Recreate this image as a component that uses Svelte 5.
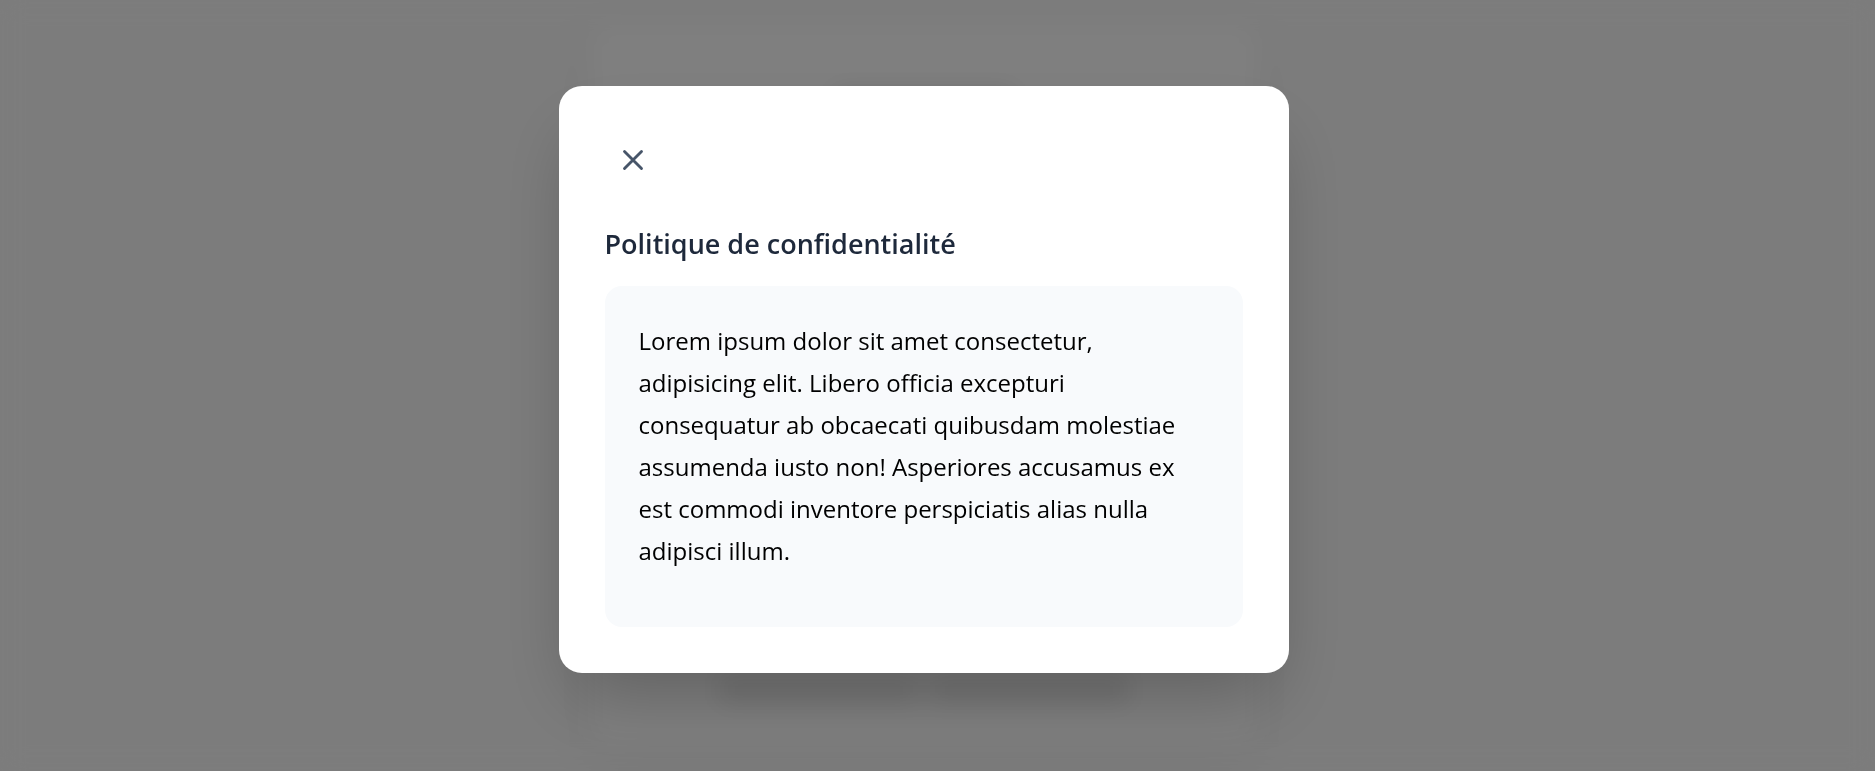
<script>
  let open = $state(true);
</script>

<div class="page" aria-hidden="true">
  <div class="card">
    <div class="smudge heading"></div>
    <div class="links">
      <div class="smudge"></div>
      <div class="smudge"></div>
    </div>
  </div>
</div>

{#if open}
  <div class="overlay">
    <div class="modal" role="dialog" aria-modal="true" aria-labelledby="policy-title">
      <button class="close" type="button" aria-label="Fermer" onclick={() => (open = false)}>
        <svg viewBox="0 0 24 24" aria-hidden="true">
          <path d="M18 6 6 18M6 6l12 12" />
        </svg>
      </button>
      <h2 id="policy-title">Politique de confidentialité</h2>
      <div class="content">
        <p>
          Lorem ipsum dolor sit amet consectetur, adipisicing elit. Libero officia excepturi
          consequatur ab obcaecati quibusdam molestiae assumenda iusto non! Asperiores accusamus ex
          est commodi inventore perspiciatis alias nulla adipisci illum.
        </p>
      </div>
    </div>
  </div>
{/if}

<style>
  :global(body) {
    margin: 0;
    background: #f9f9f9;
  }

  .page,
  .overlay {
    box-sizing: border-box;
    min-height: 100vh;
    padding: 24px 28px 24px 0;
    display: flex;
    justify-content: center;
  }

  .card {
    box-sizing: border-box;
    width: 100%;
    max-width: 668px;
    padding: 66px 130px 46px;
    border-radius: 24px;
    background: #fff;
    box-shadow: 0 12px 48px rgb(0 0 0 / 5%);
    display: flex;
    flex-direction: column;
    align-items: center;
    justify-content: space-between;
  }

  .smudge {
    height: 24px;
    flex: 1;
    background: #e6e6e6;
  }

  .heading {
    flex: none;
    width: 180px;
  }

  .links {
    width: 100%;
    display: flex;
    gap: 12px;
  }

  .overlay {
    position: fixed;
    inset: 0;
    align-items: center;
    padding-bottom: 36px;
    background: rgb(0 0 0 / 50%);
    backdrop-filter: blur(12px);
    overflow: auto;
    font-family: "Segoe UI", "Open Sans", "Noto Sans", sans-serif;
  }

  .modal {
    box-sizing: border-box;
    width: 100%;
    max-width: 730px;
    padding: 46px;
    border-radius: 23px;
    background: #fff;
    box-shadow: 0 36px 72px -17px rgb(0 0 0 / 25%);
  }

  .close {
    display: block;
    padding: 11px;
    border: 0;
    border-radius: 12px;
    background: transparent;
    color: #475569;
    cursor: pointer;
  }

  .close svg {
    display: block;
    width: 34px;
    height: 34px;
    fill: none;
    stroke: currentColor;
    stroke-width: 2;
    stroke-linecap: round;
    stroke-linejoin: round;
  }

  h2 {
    margin: 36px 0 22px;
    color: #1e293b;
    font-size: 27px;
    font-weight: 600;
    line-height: 40px;
  }

  .content {
    padding: 34px 34px 55px;
    border-radius: 17px;
    background: #f8fafc;
  }

  p {
    margin: 0;
    color: #000;
    font-size: 24px;
    line-height: 42px;
  }
</style>
